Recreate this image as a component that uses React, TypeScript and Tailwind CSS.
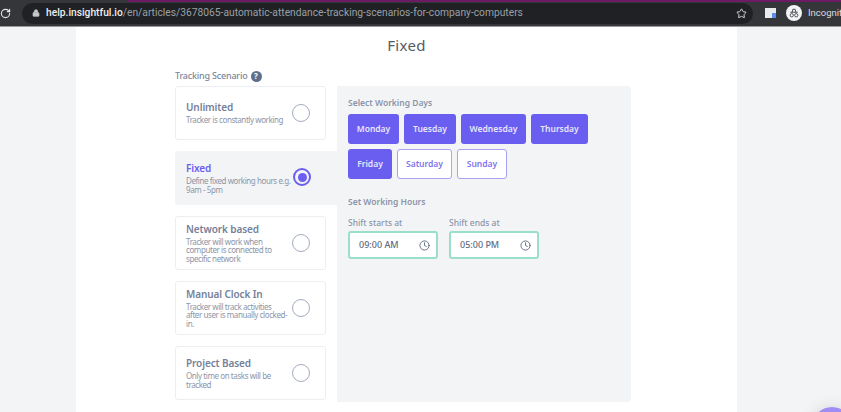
import { Star, RotateCw, Lock, Clock } from 'lucide-react';

const scenarios = [
  { title: 'Unlimited', text: 'Tracker is constantly working' },
  { title: 'Fixed', text: 'Define fixed working hours e.g. 9am - 5pm', active: true },
  { title: 'Network based', text: 'Tracker will work when computer is connected to specific network' },
  { title: 'Manual Clock In', text: 'Tracker will track activities after\u00a0user is manually clocked-in.' },
  { title: 'Project Based', text: 'Only time on tasks will be tracked' },
];

const days = [
  { name: 'Monday', width: 'w-[51px]', on: true },
  { name: 'Tuesday', width: 'w-[52px]', on: true },
  { name: 'Wednesday', width: 'w-[65px]', on: true },
  { name: 'Thursday', width: 'w-[57px]', on: true },
  { name: 'Friday', width: 'w-[44px]', on: true },
  { name: 'Saturday', width: 'w-[55px]', on: false },
  { name: 'Sunday', width: 'w-[50px]', on: false },
];

function ScenarioCard({ title, text, active }: { title: string; text: string; active?: boolean }) {
  return (
    <div
      className={
        active
          ? 'relative flex h-[54px] w-[162px] flex-col justify-center rounded-l-[3px] bg-[#f3f4f6] pl-[11px]'
          : 'relative flex h-[54px] w-[151px] flex-col justify-center rounded-[3px] border border-[#eceef2] bg-white pl-[10px]'
      }
    >
      <div className={`text-[10px] leading-[13px] font-semibold tracking-[-0.1px] ${active ? 'text-[#6c5ef0]' : 'text-[#76819a]'}`}>
        {title}
      </div>
      <p className="mt-[2px] w-[106px] text-[8px] leading-[8.5px] tracking-[-0.42px] text-[#8c95a8]">{text}</p>
      {active ? (
        <div className="absolute left-[118px] top-[17px] flex h-[18px] w-[18px] items-center justify-center rounded-full border-2 border-[#6c5ef0]">
          <div className="h-[9px] w-[9px] rounded-full bg-[#6c5ef0]" />
        </div>
      ) : (
        <div className="absolute left-[116px] top-[17px] h-[18px] w-[18px] rounded-full border-[1.5px] border-[#a3abbd]" />
      )}
    </div>
  );
}

function TimeField({ value }: { value: string }) {
  return (
    <div className="flex h-[28px] w-[90px] items-center justify-between rounded-[3px] border-2 border-[#9adfca] bg-white pl-[9px] pr-[6px]">
      <span className="text-[9px] font-medium text-[#5f6b80]">{value}</span>
      <Clock className="h-[11px] w-[11px] text-[#5f6b80]" strokeWidth={2} />
    </div>
  );
}

export default function App() {
  return (
    <div className="relative flex h-[412px] w-[841px] flex-col overflow-hidden bg-[#f3f4f6] font-['Noto_Sans',sans-serif]">
      {/* Browser bar */}
      <div className="relative flex h-[27px] shrink-0 items-center overflow-hidden border-b border-[#9a9a9a] bg-[#35363a] font-['Roboto',sans-serif]">
        <div className="absolute left-[128px] right-0 top-0 h-[2px] bg-[#6b1a63]" />
        <RotateCw className="h-[11px] w-[11px] shrink-0 text-[#e4e5e7]" strokeWidth={2.5} />
        <div className="ml-[11px] flex h-[21px] w-[731px] shrink-0 items-center rounded-full bg-[#202124] pl-[10px]">
          <Lock className="h-[8px] w-[8px] text-[#c5c7ca]" fill="#c5c7ca" />
          <span className="ml-[6px] text-[10.25px] font-medium text-[#eceef0]">help.insightful.io</span>
          <span className="text-[10.25px] text-[#9aa0a6]">/en/articles/3678065-automatic-attendance-tracking-scenarios-for-company-computers</span>
          <Star className="ml-auto mr-[6px] h-[11px] w-[11px] text-[#dfe1e5]" strokeWidth={2} />
        </div>
        <div className="relative ml-[12px] h-[10px] w-[11px] shrink-0 bg-[#e8eaed]">
          <div className="absolute bottom-0 right-0 h-[5px] w-[4px] bg-[#5b8def]" />
        </div>
        <div className="ml-[10px] flex h-[16px] w-[16px] shrink-0 items-center justify-center rounded-full bg-[#f1f3f4]">
          <svg viewBox="0 0 16 16" className="h-[12px] w-[12px]">
            <path d="M3 7h10M5.5 7l1-4h3l1 4" stroke="#3c4043" strokeWidth="1.2" fill="none" />
            <circle cx="5" cy="11" r="2.2" stroke="#3c4043" strokeWidth="1.1" fill="none" />
            <circle cx="11" cy="11" r="2.2" stroke="#3c4043" strokeWidth="1.1" fill="none" />
          </svg>
        </div>
        <span className="ml-[6px] shrink-0 whitespace-nowrap text-[9.5px] text-[#dadce0]">Incognito</span>
      </div>

      {/* Article */}
      <div className="ml-[76px] w-[661px] grow bg-white">
        <h1 className="mt-[8px] text-center text-[15px] leading-[20px] tracking-[0.3px] text-[#555a62]">Fixed</h1>
        <div className="ml-[99px] mt-[15px] flex h-[12px] items-center gap-[3px]">
          <span className="text-[9px] font-medium tracking-[-0.2px] text-[#7c869a]">Tracking Scenario</span>
          <span className="flex h-[11px] w-[11px] items-center justify-center rounded-full bg-[#5f6f8c] text-[8px] font-bold leading-none text-white">?</span>
        </div>
        <div className="ml-[99px] mt-[4px] flex">
          <div className="flex w-[162px] flex-col gap-[11px]">
            {scenarios.map((s) => (
              <ScenarioCard key={s.title} title={s.title} text={s.text} active={s.active} />
            ))}
          </div>
          <div className="h-[316px] w-[294px] rounded-r-[3px] bg-[#f3f4f6] pl-[11px] pt-[11px]">
            <div className="text-[8.5px] leading-[12px] font-semibold text-[#8c95a8]">Select Working Days</div>
            <div className="mt-[5px] flex w-[250px] flex-wrap gap-x-[5px] gap-y-[5px]">
              {days.map((d) => (
                <div
                  key={d.name}
                  className={`flex h-[30px] items-center justify-center rounded-[3px] text-[8.5px] font-semibold ${d.width} ${
                    d.on ? 'bg-[#6a5ef0] text-[#e8e6fd]' : 'border-[1.5px] border-[#a9a2f5] bg-white text-[#7f74ee]'
                  }`}
                >
                  {d.name}
                </div>
              ))}
            </div>
            <div className="mt-[17px] text-[8.5px] leading-[12px] font-semibold text-[#8c95a8]">Set Working Hours</div>
            <div className="mt-[9px] flex gap-[11px]">
              <div>
                <div className="mb-[2px] text-[8.5px] leading-[12px] font-medium text-[#8c95a8]">Shift starts at</div>
                <TimeField value="09:00 AM" />
              </div>
              <div>
                <div className="mb-[2px] text-[8.5px] leading-[12px] font-medium text-[#8c95a8]">Shift ends at</div>
                <TimeField value="05:00 PM" />
              </div>
            </div>
          </div>
        </div>
      </div>

      {/* Chat launcher peeking in at the corner */}
      <div className="absolute left-[812px] top-[407px] h-[40px] w-[40px] rounded-full bg-[#a08cf5] shadow-[0_0_16px_rgba(0,0,0,0.12)]" />
    </div>
  );
}
